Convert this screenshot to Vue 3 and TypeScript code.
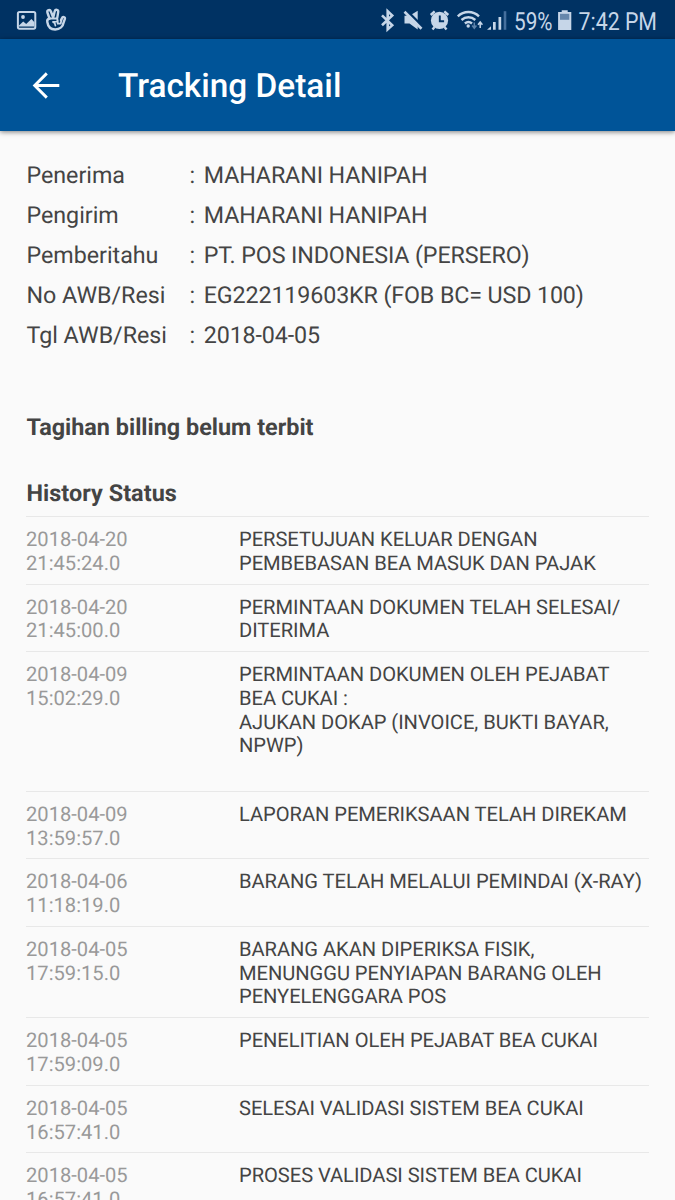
<script setup lang="ts">
interface Field {
  label: string
  value: string
}

interface HistoryEntry {
  date: string
  time: string
  lines: string[]
  trailingLine?: boolean
}

const fields: Field[] = [
  { label: 'Penerima', value: 'MAHARANI HANIPAH' },
  { label: 'Pengirim', value: 'MAHARANI HANIPAH' },
  { label: 'Pemberitahu', value: 'PT. POS INDONESIA (PERSERO)' },
  { label: 'No AWB/Resi', value: 'EG222119603KR (FOB BC= USD 100)' },
  { label: 'Tgl AWB/Resi', value: '2018-04-05' },
]

const history: HistoryEntry[] = [
  { date: '2018-04-20', time: '21:45:24.0', lines: ['PERSETUJUAN KELUAR DENGAN', 'PEMBEBASAN BEA MASUK DAN PAJAK'] },
  { date: '2018-04-20', time: '21:45:00.0', lines: ['PERMINTAAN DOKUMEN TELAH SELESAI/', 'DITERIMA'] },
  {
    date: '2018-04-09',
    time: '15:02:29.0',
    lines: ['PERMINTAAN DOKUMEN OLEH PEJABAT', 'BEA CUKAI :', 'AJUKAN DOKAP (INVOICE, BUKTI BAYAR,', 'NPWP)'],
    trailingLine: true,
  },
  { date: '2018-04-09', time: '13:59:57.0', lines: ['LAPORAN PEMERIKSAAN TELAH DIREKAM'] },
  { date: '2018-04-06', time: '11:18:19.0', lines: ['BARANG TELAH MELALUI PEMINDAI (X-RAY)'] },
  { date: '2018-04-05', time: '17:59:15.0', lines: ['BARANG AKAN DIPERIKSA FISIK,', 'MENUNGGU PENYIAPAN BARANG OLEH', 'PENYELENGGARA POS'] },
  { date: '2018-04-05', time: '17:59:09.0', lines: ['PENELITIAN OLEH PEJABAT BEA CUKAI'] },
  { date: '2018-04-05', time: '16:57:41.0', lines: ['SELESAI VALIDASI SISTEM BEA CUKAI'] },
  { date: '2018-04-05', time: '16:57:41.0', lines: ['PROSES VALIDASI SISTEM BEA CUKAI'] },
]
</script>

<template>
  <div class="screen">
    <div class="status-bar">
      <svg class="status-icons" width="675" height="39" viewBox="0 0 675 39" fill="none">
        <!-- picture -->
        <rect x="17.900" y="11.900" width="17.400" height="16.800" rx="1.600" stroke="#c6d6e8" stroke-width="2" />
        <circle cx="23" cy="17" r="1.900" fill="#c6d6e8" />
        <path d="M19 25.500l4.200-4 3 2.400 5.200-4.900 3 3.300v4.200H19z" fill="#c6d6e8" />
        <!-- victory hand -->
        <g stroke="#c6d6e8" stroke-width="2.400" stroke-linejoin="round" stroke-linecap="round">
          <path d="M49.500 18.500l-2.100-6c-.6-2.500 2.600-3.400 3.500-1l2.300 6 1.500-6.200c.7-2.400 4-1.700 3.500.8l-1 6" />
          <path d="M49.500 18.500c-2 .5-2.500 2-2.200 3.500.7 4.800 3.400 7.400 7.900 7.500 4.800 0 7.800-3.200 8.400-7l1.300-3.600c.6-2-2.200-2.600-2.900-.9l-1 2.200" />
          <path d="M50 18.500h6.300c1.700.1 1.800 2.900 0 3.200l-3.300.3c1.700.8 2.400 1.900 2.400 3.500M61.500 19.500l-.8 4.200h-3v-3.500" stroke-width="1.800" />
        </g>
        <!-- bluetooth -->
        <path d="M382 15.400l10.200 9.900-4.500 4.100V11.200l4.500 4.200L382 25.300" stroke="#c6d6e8" stroke-width="2.600" />
        <!-- muted speaker -->
        <path d="M404.500 15.800h5l8.200-5v18.800l-8.200-6.100h-5z" fill="#c6d6e8" />
        <path d="M406.300 10.200l17 17" stroke="#003263" stroke-width="2.400" />
        <path d="M404.500 11.700l17 17" stroke="#c6d6e8" stroke-width="2.700" />
        <!-- alarm -->
        <circle cx="439.500" cy="20.400" r="8.600" fill="#c6d6e8" />
        <path d="M430.700 15l4-3.700M448.300 15l-4-3.700M434.500 27l-2 2.500M444.500 27l2 2.500" stroke="#c6d6e8" stroke-width="2.400" />
        <path d="M439.800 15.500v5.700h4.300" stroke="#003263" stroke-width="1.900" />
        <!-- wifi -->
        <path d="M457.800 16.300c6-5.700 15.200-5.700 21.200 0M461.500 20c4-3.700 9.800-3.700 13.800 0M464.900 23.500c2.100-1.900 5-1.900 7.100 0" stroke="#c6d6e8" stroke-width="2.400" />
        <circle cx="468.200" cy="26" r="1.700" fill="#c6d6e8" />
        <path d="M474.300 22.500v5M472.200 25.500l2.100 2.700 2.100-2.700" stroke="#5d83ab" stroke-width="1.500" />
        <path d="M480.200 28v-5M478 24.700l2.200-2.700 2.200 2.700" stroke="#c6d6e8" stroke-width="1.500" />
        <!-- signal -->
        <path d="M487 29.800l4-3.500v3.500z" fill="#c6d6e8" />
        <path d="M493 22h2.700v7.800H493zM498.500 17h2.700v12.800h-2.700z" fill="#c6d6e8" />
        <path d="M503.700 11.200h2.600v18.600h-2.600z" fill="#456f9d" />
        <!-- battery -->
        <path d="M561.700 10.300h6v1.700h3.600v18h-13.200V12h3.600z" fill="#c6d6e8" />
        <path d="M560 13.800h9.300v6H560z" fill="#6687ab" />
        <text x="514" y="30" textLength="38.500" lengthAdjust="spacingAndGlyphs">59%</text>
        <text x="578.500" y="30" textLength="78.500" lengthAdjust="spacingAndGlyphs">7:42 PM</text>
      </svg>
    </div>

    <header class="app-bar">
      <svg class="back" width="28" height="28" viewBox="0 0 28 28" fill="none" stroke="#fff" stroke-width="2.900">
        <path d="M27.300 13.500H3M14.800 1.400L2.700 13.500l12.100 12.100" />
      </svg>
      <h1>Tracking Detail</h1>
    </header>

    <main>
      <dl class="fields">
        <div v-for="field in fields" :key="field.label" class="field">
          <dt>{{ field.label }}</dt>
          <dd class="colon">:</dd>
          <dd class="value">{{ field.value }}</dd>
        </div>
      </dl>
      <p class="billing">Tagihan billing belum terbit</p>
      <h2>History Status</h2>
      <ul class="history">
        <li v-for="(entry, i) in history" :key="i" :class="{ tall: entry.trailingLine }">
          <div class="when">
            <div>{{ entry.date }}</div>
            <div>{{ entry.time }}</div>
          </div>
          <div class="what">
            <div v-for="line in entry.lines" :key="line">{{ line }}</div>
          </div>
        </li>
      </ul>
    </main>
  </div>
</template>

<style>
body {
  margin: 0;
  background: #fafafa;
}
</style>

<style scoped>
.screen {
  width: 675px;
  height: 1200px;
  overflow: hidden;
  background: #fafafa;
  color: #444;
  font-family: Roboto, "Liberation Sans", sans-serif;
  text-rendering: geometricPrecision;
}

.status-bar {
  height: 39px;
  background: #003263;
}

.status-icons {
  display: block;
}

.status-icons text {
  font-size: 25px;
  fill: #c6d6e8;
}

.app-bar {
  display: flex;
  align-items: center;
  box-sizing: border-box;
  height: 92px;
  padding: 1px 0 0 32px;
  background: #005498;
  box-shadow: 0 1px 5px rgba(0, 0, 0, 0.5);
}

.app-bar h1 {
  margin: 3px 0 0 58px;
  color: #fff;
  font-size: 33.4px;
  font-weight: 500;
  line-height: 40px;
  white-space: nowrap;
}

main {
  padding: 24px 26px 0;
}

.fields {
  margin: 0;
}

.field {
  display: flex;
  padding-left: 0.4px;
  font-size: 23.25px;
  line-height: 40px;
  white-space: nowrap;
}

.field dt {
  width: 163.2px;
}

.field dd {
  margin: 0;
}

.field .colon {
  width: 14.2px;
}

.field .value {
  letter-spacing: -0.12px;
}

.billing,
h2 {
  margin: 0;
  padding-left: 0.4px;
  font-size: 23.4px;
  font-weight: 700;
  line-height: 28px;
}

.billing {
  padding-top: 58px;
}

h2 {
  padding-top: 38px;
  letter-spacing: 0.05px;
}

.history {
  margin: 9px 0 0;
  padding: 0;
  list-style: none;
}

.history li {
  display: flex;
  box-sizing: border-box;
  padding: 11px 0 8px;
  border-top: 1px solid #e8e8e8;
  font-size: 20.15px;
  line-height: 23.78px;
  white-space: nowrap;
}

.history .tall {
  padding-bottom: 32.5px;
}

.when {
  flex: none;
  width: 213px;
  color: #999;
}

.what {
  letter-spacing: -0.05px;
}
</style>
